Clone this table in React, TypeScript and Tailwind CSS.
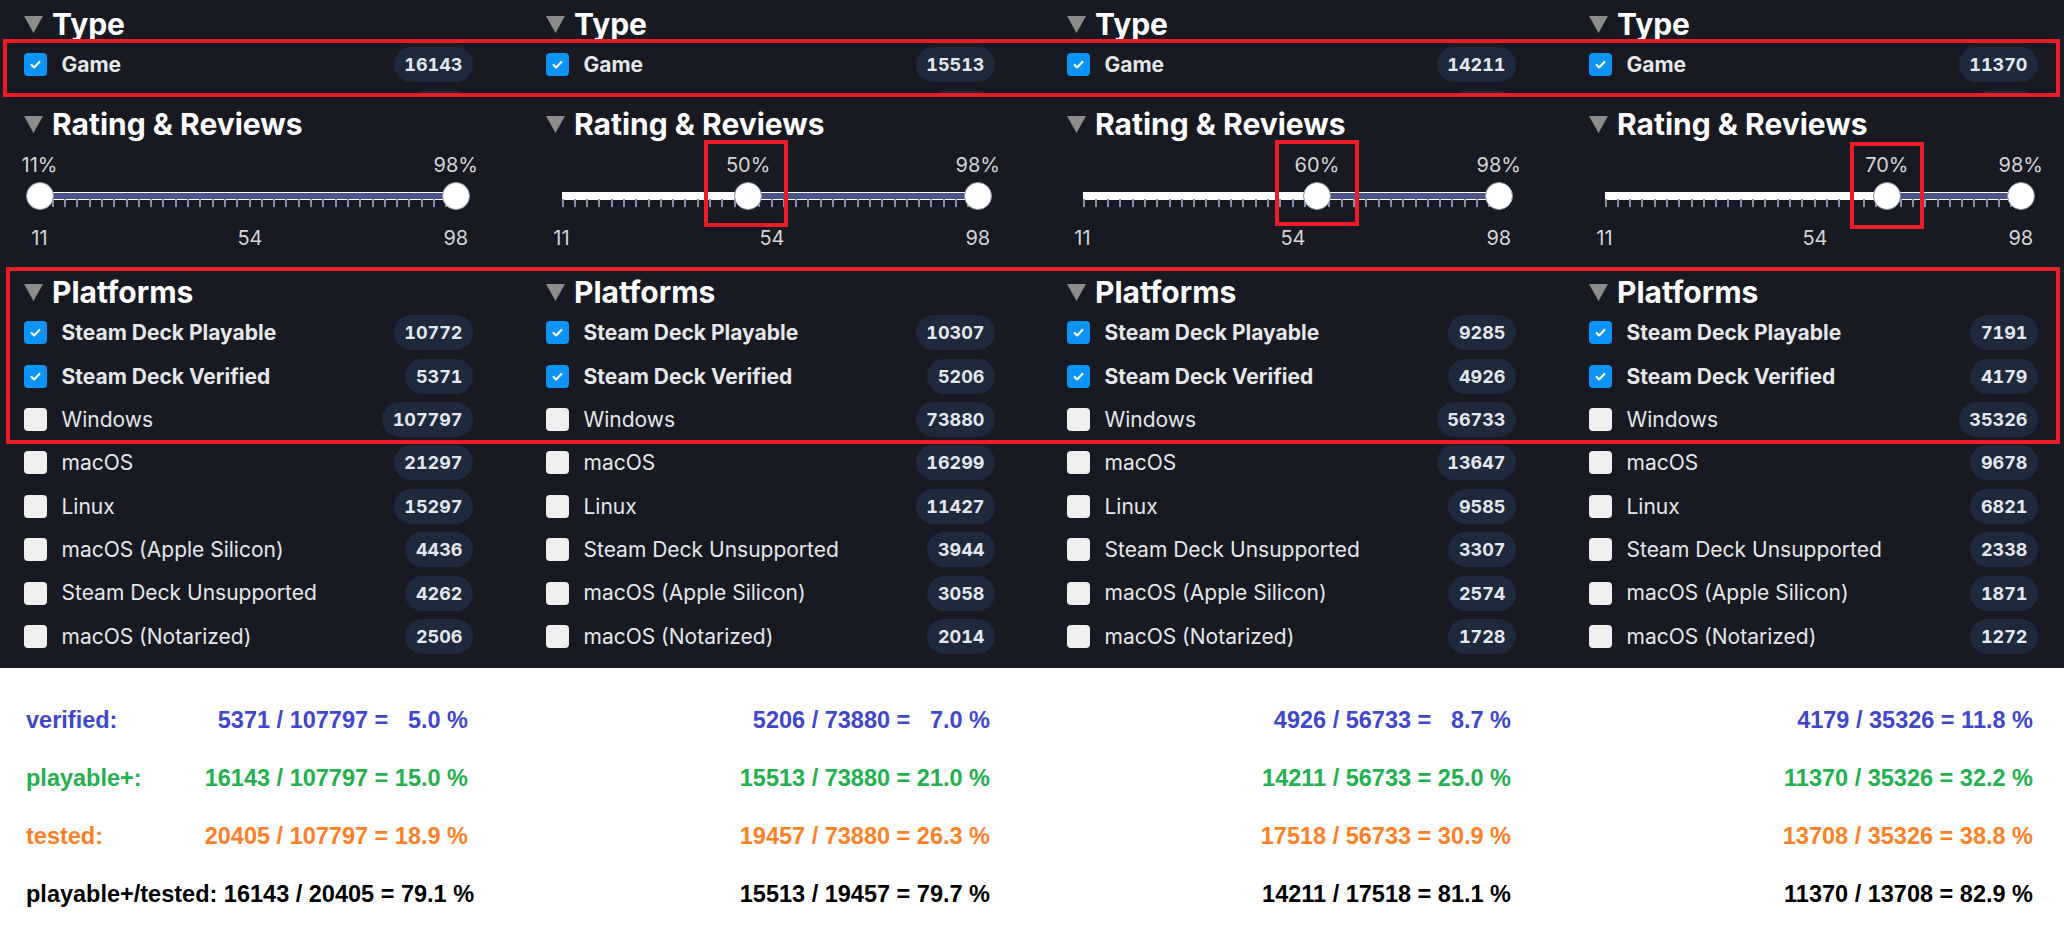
import React from "react";

type Item = { label: string; count: number; checked?: boolean };
type ThumbBox = { dx: number; w: number; top: number; h: number };
type Column = {
  game: number;
  lo: number;
  box?: ThumbBox;
  platforms: Item[];
  stats: string[];
};

const MIN = 11;
const MAX = 98;
const TRACK_L = 15.5;
const TRACK_W = 416.3;
const pos = (v: number) => TRACK_L + ((v - MIN) / (MAX - MIN)) * TRACK_W;

const platforms = (
  playable: number,
  verified: number,
  windows: number,
  rest: [string, number][]
): Item[] => [
  { label: "Steam Deck Playable", count: playable, checked: true },
  { label: "Steam Deck Verified", count: verified, checked: true },
  { label: "Windows", count: windows },
  ...rest.map(([label, count]) => ({ label, count }))
];

const columns: Column[] = [
  {
    game: 16143,
    lo: 11,
    platforms: platforms(10772, 5371, 107797, [
      ["macOS", 21297],
      ["Linux", 15297],
      ["macOS (Apple Silicon)", 4436],
      ["Steam Deck Unsupported", 4262],
      ["macOS (Notarized)", 2506]
    ]),
    stats: ["5371 / 107797 =   5.0 %", "16143 / 107797 = 15.0 %", "20405 / 107797 = 18.9 %", "16143 / 20405 = 79.1 %"]
  },
  {
    game: 15513,
    lo: 50,
    box: { dx: -44, w: 84, top: -42, h: 87 },
    platforms: platforms(10307, 5206, 73880, [
      ["macOS", 16299],
      ["Linux", 11427],
      ["Steam Deck Unsupported", 3944],
      ["macOS (Apple Silicon)", 3058],
      ["macOS (Notarized)", 2014]
    ]),
    stats: ["5206 / 73880 =   7.0 %", "15513 / 73880 = 21.0 %", "19457 / 73880 = 26.3 %", "15513 / 19457 = 79.7 %"]
  },
  {
    game: 14211,
    lo: 60,
    box: { dx: -42, w: 84, top: -42, h: 86 },
    platforms: platforms(9285, 4926, 56733, [
      ["macOS", 13647],
      ["Linux", 9585],
      ["Steam Deck Unsupported", 3307],
      ["macOS (Apple Silicon)", 2574],
      ["macOS (Notarized)", 1728]
    ]),
    stats: ["4926 / 56733 =   8.7 %", "14211 / 56733 = 25.0 %", "17518 / 56733 = 30.9 %", "14211 / 17518 = 81.1 %"]
  },
  {
    game: 11370,
    lo: 70,
    box: { dx: -37, w: 74, top: -40, h: 87 },
    platforms: platforms(7191, 4179, 35326, [
      ["macOS", 9678],
      ["Linux", 6821],
      ["Steam Deck Unsupported", 2338],
      ["macOS (Apple Silicon)", 1871],
      ["macOS (Notarized)", 1272]
    ]),
    stats: ["4179 / 35326 = 11.8 %", "11370 / 35326 = 32.2 %", "13708 / 35326 = 38.8 %", "11370 / 13708 = 82.9 %"]
  }
];

const statColors = ["text-[#3f48cc]", "text-[#22b14c]", "text-[#ff7f27]", "text-black"];
const statLabels = ["verified:", "playable+:", "tested:"];

const Cols = ({ children }: { children: (col: Column, i: number) => React.ReactNode }) => (
  <div className="grid grid-cols-[522px_521px_522px_1fr] pl-[24px]">
    {columns.map((col, i) => (
      <div key={i}>{children(col, i)}</div>
    ))}
  </div>
);

const SectionTitle = ({ title }: { title: string }) => (
  <div className="flex h-[33px] items-center gap-[9px]">
    <svg width="19" height="17" viewBox="0 0 19 17" className="mt-[1px] shrink-0">
      <polygon points="0,0 19,0 9.5,17" fill="#8c8c8c" />
    </svg>
    <span className="text-[30px] font-bold leading-[33px] text-white">{title}</span>
  </div>
);

const Checkbox = ({ checked }: { checked?: boolean }) =>
  checked ? (
    <span className="flex h-[23px] w-[23px] shrink-0 items-center justify-center rounded-[4px] bg-[#0b93f6]">
      <svg width="13" height="13" viewBox="0 0 16 16">
        <path
          d="M3.2 8.6l3.1 3 6.5-6.8"
          fill="none"
          stroke="white"
          strokeWidth="2.6"
          strokeLinecap="round"
          strokeLinejoin="round"
        />
      </svg>
    </span>
  ) : (
    <span className="h-[23px] w-[23px] shrink-0 rounded-[4px] bg-[#efefef]" />
  );

const Badge = ({ count }: { count: number }) => (
  <span className="flex h-[35px] items-center rounded-full bg-[#1e293b] px-[10.5px] text-[18px] font-bold tabular-nums text-[#e2e8f0]">
    {count}
  </span>
);

const Row = ({ item }: { item: Item }) => (
  <div className="flex h-[43.36px] w-[449px] items-center">
    <Checkbox checked={item.checked} />
    <span
      className={
        item.checked
          ? "ml-[14.5px] flex-1 text-[21px] font-bold text-[#e5e7eb]"
          : "ml-[14.5px] flex-1 text-[21px] text-[#e5e7eb]"
      }
    >
      {item.label}
    </span>
    <Badge count={item.count} />
  </div>
);

const Slider = ({ lo, box }: { lo: number; box?: ThumbBox }) => {
  const pl = pos(lo);
  const ph = pos(MAX);
  return (
    <div className="mt-[12.1px] w-[449px] text-[20px] leading-[24px] text-[#d4d4d8]">
      <div className="relative h-[24px]">
        <span className="absolute top-0 -translate-x-1/2" style={{ left: pl }}>
          {lo}%
        </span>
        <span className="absolute top-0 -translate-x-1/2" style={{ left: ph }}>
          {MAX}%
        </span>
      </div>
      <div className="relative mt-[5.3px] h-[28px]">
        <div className="absolute top-[10px] h-[8px] bg-white" style={{ left: TRACK_L, width: TRACK_W }} />
        <div className="absolute top-[11.5px] h-[6px] bg-[#4b5489]" style={{ left: pl, width: ph - pl }} />
        <div className="absolute top-[17.5px] flex h-[7.5px] justify-between" style={{ left: TRACK_L, width: 420.6 }}>
          {Array.from({ length: 35 }).map((_, i) => (
            <span key={i} className="h-full w-[2px] bg-[#8b90ae]" />
          ))}
        </div>
        {[pl, ph].map((p, i) => (
          <span
            key={i}
            className="absolute top-0 h-[28px] w-[28px] rounded-full border border-[#8b90ae] bg-white"
            style={{ left: p - 14 }}
          />
        ))}
        {box && (
          <span
            className="absolute z-10 border-4 border-[#ed1c24]"
            style={{ left: pl + box.dx, top: box.top, width: box.w, height: box.h }}
          />
        )}
      </div>
      <div className="relative mt-[15.7px] h-[24px]">
        <span className="absolute top-0 -translate-x-1/2" style={{ left: pos(MIN) }}>
          {MIN}
        </span>
        <span className="absolute top-0 -translate-x-1/2" style={{ left: 226 }}>
          54
        </span>
        <span className="absolute top-0 -translate-x-1/2" style={{ left: ph }}>
          {MAX}
        </span>
      </div>
    </div>
  );
};

export default function App() {
  return (
    <div className="relative min-h-screen bg-white font-['Inter','Noto_Sans',sans-serif]">
      <div className="bg-[#171a22] pt-[7.6px] pb-[9.5px]">
        <Cols>{() => <SectionTitle title="Type" />}</Cols>
        <div className="mt-[2.7px]">
          <Cols>
            {(col) => (
              <div className="h-[52.7px] overflow-hidden">
                <Row item={{ label: "Game", count: col.game, checked: true }} />
                <div className="flex h-[43.36px] w-[449px] items-center justify-end">
                  <span className="h-[35px] w-[66px] rounded-full bg-[#1e293b]" />
                </div>
              </div>
            )}
          </Cols>
        </div>
        <div className="mt-[11.6px]">
          <Cols>{() => <SectionTitle title="Rating & Reviews" />}</Cols>
        </div>
        <Cols>{(col) => <Slider lo={col.lo} box={col.box} />}</Cols>
        <div className="mt-[26.2px]">
          <Cols>{() => <SectionTitle title="Platforms" />}</Cols>
        </div>
        <div className="mt-[2.4px]">
          <Cols>
            {(col) => (
              <div className="flex flex-col">
                {col.platforms.map((item) => (
                  <Row key={item.label} item={item} />
                ))}
              </div>
            )}
          </Cols>
        </div>
      </div>

      <div className="pt-[23.2px] pb-[20px] font-['Liberation_Sans',Arial,sans-serif] text-[23.5px] font-bold leading-[58px]">
        <Cols>
          {(col, i) => (
            <div className="w-[444px]">
              {col.stats.map((s, r) =>
                i === 0 ? (
                  r < 3 ? (
                    <div key={r} className={`flex justify-between whitespace-pre pl-[2px] ${statColors[r]}`}>
                      <span>{statLabels[r]}</span>
                      <span>{s}</span>
                    </div>
                  ) : (
                    <div key={r} className={`whitespace-pre pl-[2px] ${statColors[r]}`}>
                      {"playable+/tested: " + s}
                    </div>
                  )
                ) : (
                  <div key={r} className={`whitespace-pre text-right ${statColors[r]}`}>
                    {s}
                  </div>
                )
              )}
            </div>
          )}
        </Cols>
      </div>

      <div className="pointer-events-none absolute left-[3px] top-[39px] h-[58px] w-[2057px] border-4 border-[#ed1c24]" />
      <div className="pointer-events-none absolute left-[6px] top-[267px] h-[177px] w-[2054px] border-4 border-[#ed1c24]" />
    </div>
  );
}
